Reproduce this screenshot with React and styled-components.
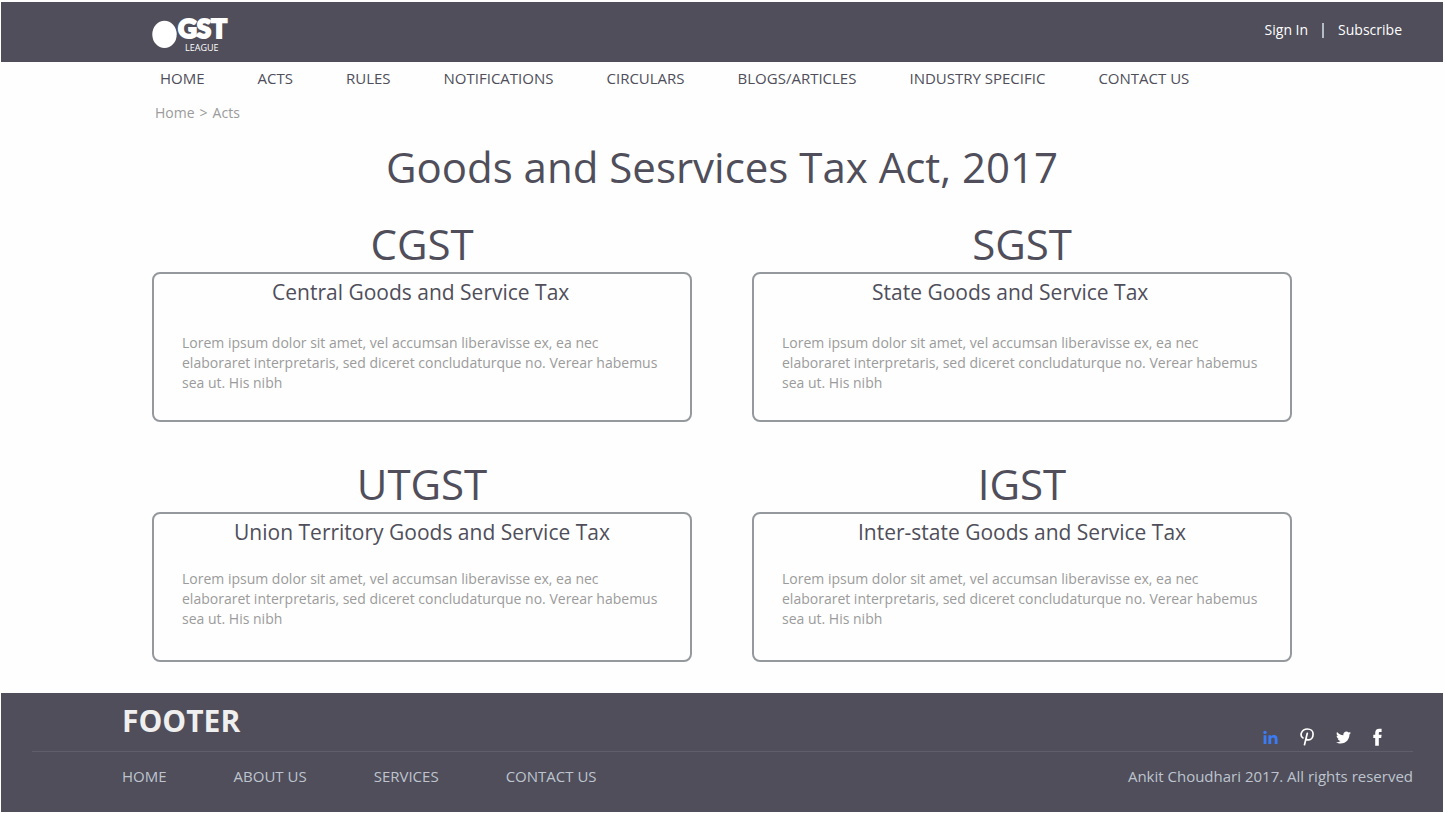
import React from "react";
import styled, { createGlobalStyle } from "styled-components";
import { FaTwitter } from "react-icons/fa";

const GlobalStyle = createGlobalStyle`
  * { box-sizing: border-box; }
  body {
    margin: 0;
    padding: 2px 2px 0 1px;
    background: #fefefe;
    color: #4f4e5a;
    font-family: "Open Sans", "Noto Sans", sans-serif;
  }
  h1, h2, h3, p { margin: 0; font-weight: 400; }
  a { color: inherit; text-decoration: none; }
`;

const Container = styled.div`
  max-width: 1140px;
  margin: 0 auto;
`;

const Header = styled.header`
  display: grid;
  grid-template-columns: 1fr minmax(0, 1140px) 1fr;
  align-items: start;
  height: 60px;
  background: #4f4e5a;
  color: #ffffff;
`;

const Logo = styled.a`
  grid-column: 2;
  grid-row: 1;
  justify-self: start;
`;

const LogoMark = styled.svg`
  display: block;
  width: 84px;
  height: 60px;
  fill: #ffffff;
`;

const Account = styled.div`
  grid-column: 2 / 4;
  grid-row: 1;
  justify-self: end;
  display: flex;
  align-items: center;
  gap: 14px;
  padding: 18px 41px 0 0;
  font-size: 14px;
  line-height: 20px;
`;

const Divider = styled.span`
  width: 2px;
  height: 15px;
  background: #b4bcc8;
`;

const Nav = styled.nav`
  display: flex;
  gap: 53px;
  padding: 6px 8px 0;
  font-size: 15px;
  line-height: 20px;
  white-space: nowrap;
`;

const Breadcrumb = styled.nav`
  display: flex;
  gap: 5px;
  padding: 15px 3px 0;
  color: #9b9b9b;
  font-size: 14px;
  line-height: 20px;
`;

const PageTitle = styled.h1`
  padding-top: 14px;
  text-align: center;
  font-size: 42px;
  line-height: 60px;
`;

const Acts = styled.main`
  display: grid;
  grid-template-columns: 1fr 1fr;
  gap: 37px 60px;
  padding: 22px 0 31px;
`;

const ActCode = styled.h2`
  padding-bottom: 3px;
  text-align: center;
  font-size: 42px;
  line-height: 50px;
`;

const Card = styled.div`
  min-height: 150px;
  padding: 2px 28px 0;
  border: 2px solid #95999d;
  border-radius: 8px;
`;

const ActName = styled.h3`
  width: fit-content;
  min-width: 300px;
  margin: 0 auto;
  font-size: 21px;
  line-height: 32px;
`;

const Summary = styled.p`
  padding-top: ${({ $compact }) => ($compact ? "21px" : "25px")};
  color: #9b9b9b;
  font-size: 14px;
  line-height: 20px;
`;

const Footer = styled.footer`
  height: 119px;
  padding: 8px 30px 0 31px;
  background: #4f4e5a;
`;

const FooterTop = styled.div`
  display: flex;
  justify-content: space-between;
  align-items: flex-start;
  height: 51px;
  padding: 0 31px 0 90px;
  border-bottom: 1px solid #5f5e6a;
`;

const FooterTitle = styled.h2`
  color: #efefef;
  font-size: 30px;
  font-weight: 700;
  line-height: 40px;
`;

const Social = styled.div`
  display: flex;
  gap: 22px;
  padding-top: 27px;
`;

const SocialLink = styled.a`
  display: flex;
  align-items: center;
  height: 18px;
  color: ${({ $active }) => ($active ? "#3b7cf5" : "#ffffff")};
`;

const FooterBottom = styled.div`
  display: flex;
  justify-content: space-between;
  padding: 14px 0 0 90px;
  color: #bec4cf;
  font-size: 15px;
  line-height: 20px;
`;

const FooterNav = styled.nav`
  display: flex;
  gap: 67px;
`;

const LinkedInIcon = () => (
  <svg width="15" height="18" viewBox="0 0 15 18" fill="currentColor">
    <circle cx="2" cy="4.4" r="1.7" />
    <path d="M.6 7.2h2.8V16H.6zM5.4 7.2H8v1.3c.6-1 1.600-1.500 2.900-1.500 2.500 0 3.600 1.500 3.600 4.100V16h-2.800v-4.500c0-1.300-.5-2.100-1.600-2.100-1.200 0-1.900.8-1.900 2.200V16H5.400z" />
  </svg>
);

const PinterestIcon = () => (
  <svg width="14" height="18" viewBox="0 0 14 18" fill="none" stroke="currentColor" strokeWidth="1.7" strokeLinecap="round">
    <path d="M2.900 9.900C1.200 8.700.8 6.300 1.600 4.500 2.600 2.300 4.800 1 7.400 1c3.300 0 5.700 2 5.700 5 0 3.400-2 5.900-4.500 5.900-1.300 0-2.200-.6-2.500-1.500M7.300 5.300 4.500 16.700" />
  </svg>
);

const TwitterIcon = () => <FaTwitter size={15} />;

const FacebookIcon = () => (
  <svg width="9" height="18" viewBox="0 0 9 18" fill="currentColor">
    <path d="M2.200 17.800V9.900H.3V6.700h1.900V4.900C2.200 2.200 3.600.7 6.200.7h2.400v3.200H7.100c-1.100 0-1.300.4-1.300 1.300v1.500h2.800l-.4 3.200H5.800v7.900z" />
  </svg>
);

const navItems = [
  "HOME",
  "ACTS",
  "RULES",
  "NOTIFICATIONS",
  "CIRCULARS",
  "BLOGS/ARTICLES",
  "INDUSTRY SPECIFIC",
  "CONTACT US",
];

const acts = [
  { code: "CGST", name: "Central Goods and Service Tax" },
  { code: "SGST", name: "State Goods and Service Tax" },
  { code: "UTGST", name: "Union Territory Goods and Service Tax", compact: true },
  { code: "IGST", name: "Inter-state Goods and Service Tax", compact: true },
];

const footerItems = ["HOME", "ABOUT US", "SERVICES", "CONTACT US"];

const social = [
  { label: "LinkedIn", Icon: LinkedInIcon, active: true },
  { label: "Pinterest", Icon: PinterestIcon },
  { label: "Twitter", Icon: TwitterIcon },
  { label: "Facebook", Icon: FacebookIcon },
];

export default function App() {
  return (
    <>
      <GlobalStyle />
      <Header>
        <Logo href="#" aria-label="GST League">
          <LogoMark viewBox="0 0 84 60">
            <ellipse cx="12.500" cy="32.400" rx="12.200" ry="13.700" />
            <text x="26" y="36" fontFamily="Lato" fontWeight="900" fontSize="26" stroke="#fff" strokeWidth="2">
              GST
            </text>
            <text x="33" y="49" fontFamily="Open Sans" fontSize="9">
              LEAGUE
            </text>
          </LogoMark>
        </Logo>
        <Account>
          <a href="#">Sign In</a>
          <Divider />
          <a href="#">Subscribe</a>
        </Account>
      </Header>
      <Container>
        <Nav>
          {navItems.map((item) => (
            <a href="#" key={item}>{item}</a>
          ))}
        </Nav>
        <Breadcrumb>
          <a href="#">Home</a>
          <span>&gt;</span>
          <a href="#">Acts</a>
        </Breadcrumb>
        <PageTitle>Goods and Sesrvices Tax Act, 2017</PageTitle>
        <Acts>
          {acts.map(({ code, name, compact }) => (
            <section key={code}>
              <ActCode>{code}</ActCode>
              <Card>
                <ActName>{name}</ActName>
                <Summary $compact={compact}>
                  Lorem ipsum dolor sit amet, vel accumsan liberavisse ex, ea nec elaboraret
                  interpretaris, sed diceret concludaturque no. Verear habemus sea ut. His nibh
                </Summary>
              </Card>
            </section>
          ))}
        </Acts>
      </Container>
      <Footer>
        <FooterTop>
          <FooterTitle>FOOTER</FooterTitle>
          <Social>
            {social.map(({ label, Icon, active }) => (
              <SocialLink href="#" key={label} aria-label={label} $active={active}>
                <Icon />
              </SocialLink>
            ))}
          </Social>
        </FooterTop>
        <FooterBottom>
          <FooterNav>
            {footerItems.map((item) => (
              <a href="#" key={item}>{item}</a>
            ))}
          </FooterNav>
          <p>Ankit Choudhari 2017. All rights reserved</p>
        </FooterBottom>
      </Footer>
    </>
  );
}
